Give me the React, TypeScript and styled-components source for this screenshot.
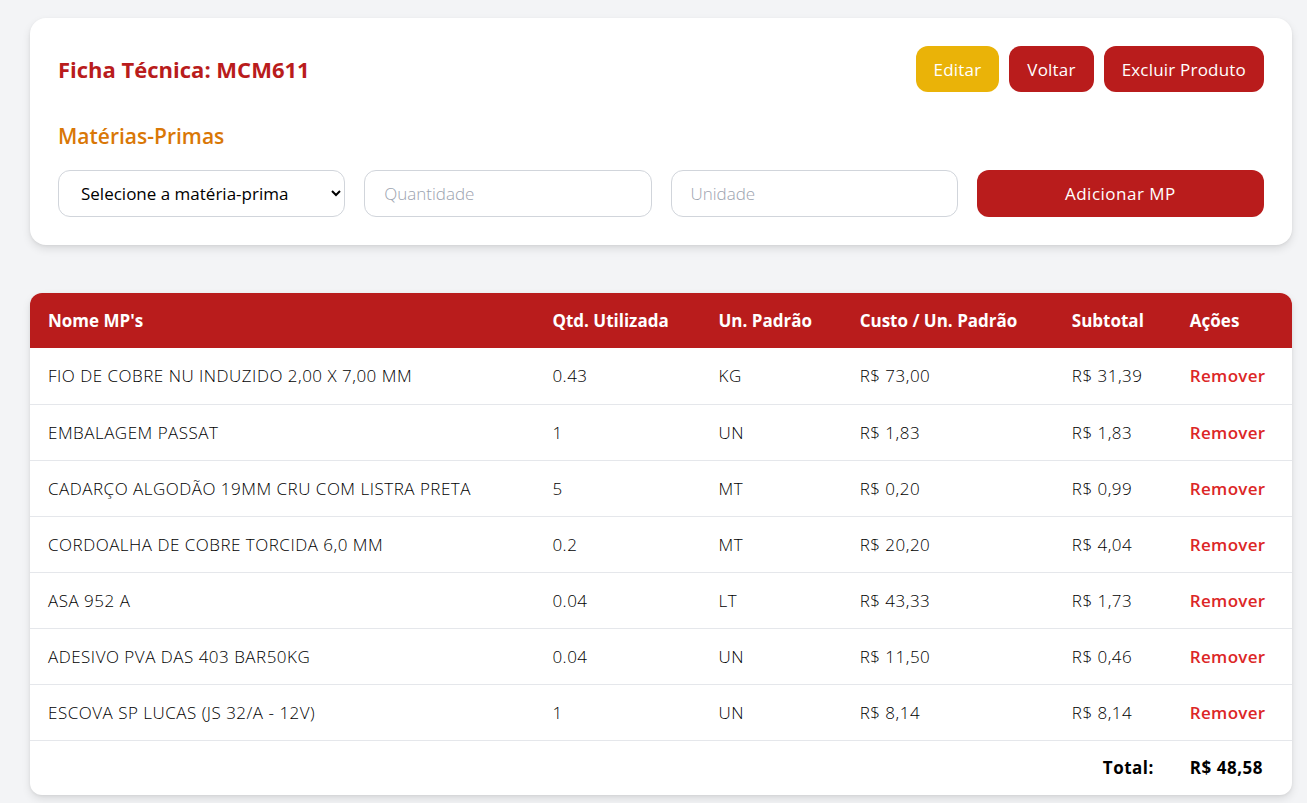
import React from "react";
import styled, { createGlobalStyle } from "styled-components";

const GlobalStyle = createGlobalStyle`
  * { box-sizing: border-box; }
  html, body { margin: 0; padding: 0; }
  body {
    background: #f3f4f6;
    font-family: "Open Sans", "Noto Sans", sans-serif;
    color: #000;
  }
`;

const Page = styled.div`
  padding: 18px 15px 8px 30px;
  display: flex;
  flex-direction: column;
  gap: 48px;
`;

const Card = styled.section`
  background: #fff;
  border-radius: 16px;
  box-shadow: 0 4px 8px rgba(0, 0, 0, 0.1), 0 1px 3px rgba(0, 0, 0, 0.06);
`;

const TopCard = styled(Card)`
  padding: 28px;
`;

const HeaderRow = styled.div`
  display: flex;
  align-items: center;
  justify-content: space-between;
`;

const Title = styled.h1`
  margin: 0;
  font-size: 22px;
  font-weight: 700;
  color: #b91c1c;
`;

const ButtonGroup = styled.div`
  display: flex;
  gap: 10px;
`;

const Button = styled.button<{ $variant?: "yellow" | "red" }>`
  height: 46px;
  padding: 0 18px;
  border: none;
  border-radius: 12px;
  font-family: inherit;
  font-size: 17px;
  font-weight: 500;
  letter-spacing: 0.2px;
  color: #fff;
  background: ${(p) => (p.$variant === "yellow" ? "#eab308" : "#b91c1c")};
  cursor: pointer;
`;

const SectionTitle = styled.h2`
  margin: 30px 0 20px;
  font-size: 21px;
  font-weight: 600;
  color: #d97706;
`;

const FormGrid = styled.div`
  display: grid;
  grid-template-columns: repeat(4, 1fr);
  gap: 19px;
`;

const fieldBase = `
  height: 47px;
  border: 1px solid #d1d5db;
  border-radius: 12px;
  background: #fff;
  font-family: inherit;
  font-size: 17px;
  color: #000;
  width: 100%;
`;

const Select = styled.select`
  ${fieldBase}
  padding: 0 10px 0 18px;
`;

const Input = styled.input`
  ${fieldBase}
  padding: 0 19px;
  font-weight: 300;
  &::placeholder { color: #9ca3af; }
`;

const AddButton = styled(Button)`
  height: 47px;
  width: 100%;
  letter-spacing: 0.5px;
`;

const TableCard = styled(Card)`
  border-radius: 12px;
  overflow: hidden;
`;

const Table = styled.table`
  width: 100%;
  border-collapse: collapse;
  table-layout: fixed;
`;

const Th = styled.th<{ $w: number }>`
  width: ${(p) => p.$w}px;
  height: 55px;
  padding: 0 18px;
  text-align: left;
  font-size: 17px;
  font-weight: 700;
  color: #fff;
  background: #b91c1c;
  white-space: nowrap;
`;

const Tr = styled.tr`
  border-bottom: 1px solid #e5e7eb;
`;

const Td = styled.td<{ $right?: boolean; $bold?: boolean; $h?: number }>`
  height: ${(p) => p.$h ?? 56}px;
  padding: 0 18px;
  font-size: 17px;
  letter-spacing: 0.5px;
  font-weight: ${(p) => (p.$bold ? 700 : 300)};
  text-align: ${(p) => (p.$right ? "right" : "left")};
  white-space: nowrap;
`;

const RemoveLink = styled.span`
  color: #dc2626;
  font-weight: 600;
  letter-spacing: 0.3px;
  cursor: pointer;
`;

const columns = [
  { label: "Nome MP's", w: 504 },
  { label: "Qtd. Utilizada", w: 166 },
  { label: "Un. Padrão", w: 141 },
  { label: "Custo / Un. Padrão", w: 212 },
  { label: "Subtotal", w: 118 },
  { label: "Ações", w: 120 },
];

const rows = [
  ["FIO DE COBRE NU INDUZIDO 2,00 X 7,00 MM", "0.43", "KG", "R$ 73,00", "R$ 31,39"],
  ["EMBALAGEM PASSAT", "1", "UN", "R$ 1,83", "R$ 1,83"],
  ["CADARÇO ALGODÃO 19MM CRU COM LISTRA PRETA", "5", "MT", "R$ 0,20", "R$ 0,99"],
  ["CORDOALHA DE COBRE TORCIDA 6,0 MM", "0.2", "MT", "R$ 20,20", "R$ 4,04"],
  ["ASA 952 A", "0.04", "LT", "R$ 43,33", "R$ 1,73"],
  ["ADESIVO PVA DAS 403 BAR50KG", "0.04", "UN", "R$ 11,50", "R$ 0,46"],
  ["ESCOVA SP LUCAS (JS 32/A - 12V)", "1", "UN", "R$ 8,14", "R$ 8,14"],
];

export default function App() {
  return (
    <>
      <GlobalStyle />
      <Page>
        <TopCard>
          <HeaderRow>
            <Title>Ficha Técnica: MCM611</Title>
            <ButtonGroup>
              <Button $variant="yellow">Editar</Button>
              <Button>Voltar</Button>
              <Button>Excluir Produto</Button>
            </ButtonGroup>
          </HeaderRow>
          <SectionTitle>Matérias-Primas</SectionTitle>
          <FormGrid>
            <Select defaultValue="">
              <option value="">Selecione a matéria-prima</option>
            </Select>
            <Input placeholder="Quantidade" />
            <Input placeholder="Unidade" />
            <AddButton>Adicionar MP</AddButton>
          </FormGrid>
        </TopCard>
        <TableCard>
          <Table>
            <thead>
              <tr>
                {columns.map((c) => (
                  <Th key={c.label} $w={c.w}>
                    {c.label}
                  </Th>
                ))}
              </tr>
            </thead>
            <tbody>
              {rows.map((r) => (
                <Tr key={r[0]}>
                  {r.map((cell, i) => (
                    <Td key={i}>{cell}</Td>
                  ))}
                  <Td>
                    <RemoveLink>Remover</RemoveLink>
                  </Td>
                </Tr>
              ))}
              <tr>
                <Td colSpan={4} $h={55} />
                <Td $right $bold $h={55}>Total:</Td>
                <Td $bold $h={55}>R$ 48,58</Td>
              </tr>
            </tbody>
          </Table>
        </TableCard>
      </Page>
    </>
  );
}
